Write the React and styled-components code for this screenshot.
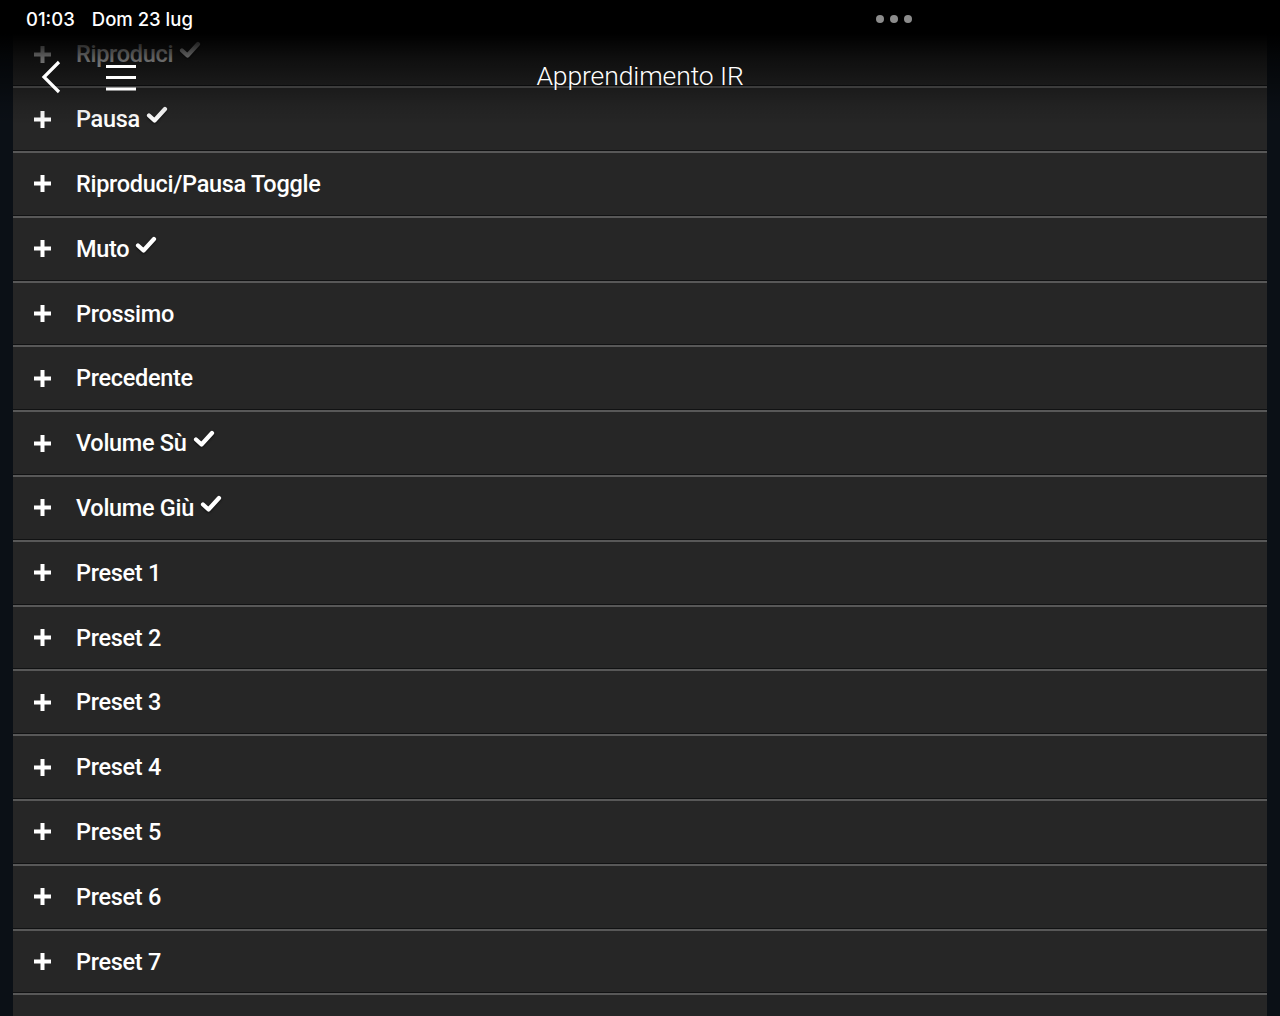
import React from "react";
import styled, { createGlobalStyle } from "styled-components";

const GlobalStyle = createGlobalStyle`
  html, body {
    margin: 0;
    padding: 0;
    background: #0b1016;
  }
  body {
    font-family: Roboto, "Liberation Sans", sans-serif;
    -webkit-font-smoothing: antialiased;
  }
`;

const ITEMS = [
  { label: "Riproduci", learned: true },
  { label: "Pausa", learned: true },
  { label: "Riproduci/Pausa Toggle" },
  { label: "Muto", learned: true },
  { label: "Prossimo" },
  { label: "Precedente" },
  { label: "Volume Sù", learned: true },
  { label: "Volume Giù", learned: true },
  { label: "Preset 1" },
  { label: "Preset 2" },
  { label: "Preset 3" },
  { label: "Preset 4" },
  { label: "Preset 5" },
  { label: "Preset 6" },
  { label: "Preset 7" },
];

function PlusIcon() {
  return (
    <svg width="17" height="17" viewBox="0 0 17 17">
      <rect x="6.5" y="0" width="4" height="17" fill="#fff" />
      <rect x="0" y="6.5" width="17" height="4" fill="#fff" />
    </svg>
  );
}

function CheckIcon() {
  return (
    <svg width="22" height="18" viewBox="0 0 22 18">
      <path
        d="M3 9.5 L8.5 14.5 L19 3"
        fill="none"
        stroke="#fff"
        strokeWidth="4.2"
        strokeLinejoin="round"
        strokeLinecap="round"
      />
    </svg>
  );
}

function BackIcon() {
  return (
    <svg width="24" height="34" viewBox="0 0 24 34">
      <path d="M19 2 L4 17 L19 32" fill="none" stroke="#fff" strokeWidth="3.2" />
    </svg>
  );
}

function MenuIcon() {
  return (
    <svg width="32" height="28" viewBox="0 0 32 28">
      <rect x="1" y="2" width="30" height="3" fill="#fff" />
      <rect x="1" y="13" width="30" height="3" fill="#fff" />
      <rect x="1" y="24.5" width="30" height="3" fill="#fff" />
    </svg>
  );
}

export default function App() {
  return (
    <>
      <GlobalStyle />
      <Screen>
        <List>
          {ITEMS.map((item) => (
            <Row key={item.label}>
              <PlusSlot>
                <PlusIcon />
              </PlusSlot>
              <Label>{item.label}</Label>
              {item.learned && (
                <Check>
                  <CheckIcon />
                </Check>
              )}
            </Row>
          ))}
          {/* next row, scrolled just past the bottom edge */}
          <Row />
        </List>

        <Header>
          <StatusBar>
            <StatusText>01:03</StatusText>
            <StatusText>Dom 23 lug</StatusText>
            <Dots>
              <Dot />
              <Dot />
              <Dot />
            </Dots>
          </StatusBar>
          <NavBar>
            <NavButtons>
              <IconButton>
                <BackIcon />
              </IconButton>
              <IconButton>
                <MenuIcon />
              </IconButton>
            </NavButtons>
            <Title>Apprendimento IR</Title>
          </NavBar>
        </Header>
      </Screen>
    </>
  );
}

const Screen = styled.div`
  position: relative;
  width: 1280px;
  height: 1016px;
  overflow: hidden;
  background: #0b1016;
`;

const List = styled.div`
  display: flex;
  flex-direction: column;
  margin: 20.5px 13px 0 13px;
`;

const Row = styled.div`
  display: flex;
  align-items: center;
  height: 64.8px;
  flex-shrink: 0;
  box-sizing: border-box;
  padding-left: 21px;
  padding-top: 2px;
  background: #262626;
  border-top: 1px solid #111213;
  box-shadow: inset 0 2px 0 #585858;
`;

const PlusSlot = styled.span`
  display: flex;
  width: 17px;
  height: 17px;
`;

const Label = styled.span`
  margin-left: 25px;
  font-size: 23.5px;
  font-weight: 500;
  color: #fff;
  letter-spacing: -0.3px;
`;

const Check = styled.span`
  display: flex;
  margin-left: 6px;
  margin-bottom: 8px;
  filter: drop-shadow(0 1px 1px rgba(0, 0, 0, 0.6));
`;

const Header = styled.div`
  position: absolute;
  top: 0;
  left: 0;
  right: 0;
  height: 125px;
  background: linear-gradient(
    to bottom,
    #000 0px,
    #000 34px,
    rgba(0, 0, 0, 0.62) 58px,
    rgba(0, 0, 0, 0.3) 88px,
    rgba(0, 0, 0, 0.12) 105px,
    rgba(0, 0, 0, 0) 125px
  );
`;

const StatusBar = styled.div`
  position: relative;
  display: flex;
  align-items: center;
  gap: 17px;
  height: 37px;
  padding-left: 26px;
`;

const StatusText = styled.span`
  font-family: Inter, Roboto, sans-serif;
  font-size: 18.5px;
  font-weight: 500;
  color: #fff;
`;

const Dots = styled.div`
  position: absolute;
  left: 876px;
  top: 15px;
  display: flex;
  gap: 6px;
`;

const Dot = styled.span`
  width: 8px;
  height: 8px;
  border-radius: 50%;
  background: #8c8c8c;
`;

const NavBar = styled.div`
  position: relative;
  display: flex;
  align-items: flex-start;
  justify-content: center;
  height: 80px;
`;

const NavButtons = styled.div`
  position: absolute;
  left: 40px;
  top: 23px;
  display: flex;
  align-items: center;
  gap: 41px;
`;

const IconButton = styled.span`
  display: flex;
`;

const Title = styled.h1`
  margin: 21px 0 0 0;
  font-size: 26.5px;
  line-height: 36px;
  font-weight: 300;
  color: #fff;
  letter-spacing: -0.1px;
`;
